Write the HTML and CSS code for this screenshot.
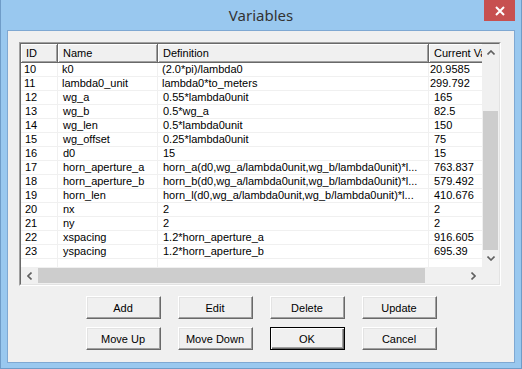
FILE: index.html
```html
<!DOCTYPE html>
<html>
<head>
  <title>Variables</title>
  <link rel="stylesheet" href="styles.css">
</head>
<body>
  <div class="window">
    <div class="titlebar">
      <span class="title">Variables</span>
      <div class="close">
        <svg width="10" height="10" viewBox="0 0 10 10">
          <path d="M1 1 L9 9 M9 1 L1 9" stroke="#fff" stroke-width="2" fill="none"/>
        </svg>
      </div>
    </div>

    <div class="client">
      <div class="listview">
        <div class="listview-inner">
          <div class="viewport">
            <div class="row header">
              <div class="cell">ID</div>
              <div class="cell">Name</div>
              <div class="cell">Definition</div>
              <div class="cell">Current Value</div>
            </div>
            <div class="row stale">
              <div class="cell">10</div>
              <div class="cell">k0</div>
              <div class="cell">(2.0*pi)/lambda0</div>
              <div class="cell">20.9585</div>
            </div>
            <div class="row stale">
              <div class="cell">11</div>
              <div class="cell">lambda0_unit</div>
              <div class="cell">lambda0*to_meters</div>
              <div class="cell">299.792</div>
            </div>
            <div class="row">
              <div class="cell">12</div>
              <div class="cell">wg_a</div>
              <div class="cell">0.55*lambda0unit</div>
              <div class="cell">165</div>
            </div>
            <div class="row">
              <div class="cell">13</div>
              <div class="cell">wg_b</div>
              <div class="cell">0.5*wg_a</div>
              <div class="cell">82.5</div>
            </div>
            <div class="row">
              <div class="cell">14</div>
              <div class="cell">wg_len</div>
              <div class="cell">0.5*lambda0unit</div>
              <div class="cell">150</div>
            </div>
            <div class="row">
              <div class="cell">15</div>
              <div class="cell">wg_offset</div>
              <div class="cell">0.25*lambda0unit</div>
              <div class="cell">75</div>
            </div>
            <div class="row">
              <div class="cell">16</div>
              <div class="cell">d0</div>
              <div class="cell">15</div>
              <div class="cell">15</div>
            </div>
            <div class="row">
              <div class="cell">17</div>
              <div class="cell">horn_aperture_a</div>
              <div class="cell">horn_a(d0,wg_a/lambda0unit,wg_b/lambda0unit)*l...</div>
              <div class="cell">763.837</div>
            </div>
            <div class="row">
              <div class="cell">18</div>
              <div class="cell">horn_aperture_b</div>
              <div class="cell">horn_b(d0,wg_a/lambda0unit,wg_b/lambda0unit)*l...</div>
              <div class="cell">579.492</div>
            </div>
            <div class="row">
              <div class="cell">19</div>
              <div class="cell">horn_len</div>
              <div class="cell">horn_l(d0,wg_a/lambda0unit,wg_b/lambda0unit)*l...</div>
              <div class="cell">410.676</div>
            </div>
            <div class="row">
              <div class="cell">20</div>
              <div class="cell">nx</div>
              <div class="cell">2</div>
              <div class="cell">2</div>
            </div>
            <div class="row">
              <div class="cell">21</div>
              <div class="cell">ny</div>
              <div class="cell">2</div>
              <div class="cell">2</div>
            </div>
            <div class="row">
              <div class="cell">22</div>
              <div class="cell">xspacing</div>
              <div class="cell">1.2*horn_aperture_a</div>
              <div class="cell">916.605</div>
            </div>
            <div class="row">
              <div class="cell">23</div>
              <div class="cell">yspacing</div>
              <div class="cell">1.2*horn_aperture_b</div>
              <div class="cell">695.39</div>
            </div>
            <div class="row filler">
              <div class="cell"></div>
              <div class="cell"></div>
              <div class="cell"></div>
              <div class="cell"></div>
            </div>
          </div>

          <div class="vscroll">
            <div class="arrow">
              <svg width="8" height="5" viewBox="0 0 8 5"><polyline points="0.5,4.5 4,1 7.5,4.5" stroke="#606060" stroke-width="1.6" fill="none"/></svg>
            </div>
            <div class="track">
              <div class="thumb"></div>
            </div>
            <div class="arrow">
              <svg width="8" height="5" viewBox="0 0 8 5"><polyline points="0.5,0.5 4,4 7.5,0.5" stroke="#606060" stroke-width="1.6" fill="none"/></svg>
            </div>
          </div>

          <div class="hscroll">
            <div class="arrow">
              <svg width="5" height="8" viewBox="0 0 5 8"><polyline points="4.5,0.5 1,4 4.5,7.5" stroke="#606060" stroke-width="1.6" fill="none"/></svg>
            </div>
            <div class="track">
              <div class="thumb"></div>
            </div>
            <div class="arrow">
              <svg width="5" height="8" viewBox="0 0 5 8"><polyline points="0.5,0.5 4,4 0.5,7.5" stroke="#606060" stroke-width="1.6" fill="none"/></svg>
            </div>
          </div>

          <div class="corner"></div>
        </div>
      </div>

      <div class="buttons">
        <div class="btnrow">
          <button type="button">Add</button>
          <button type="button">Edit</button>
          <button type="button">Delete</button>
          <button type="button">Update</button>
        </div>
        <div class="btnrow">
          <button type="button">Move Up</button>
          <button type="button">Move Down</button>
          <button type="button" class="default">OK</button>
          <button type="button">Cancel</button>
        </div>
      </div>
    </div>
  </div>
</body>
</html>
```

FILE: styles.css
```css
body {
  margin: 0;
  font-family: "Liberation Sans", Arial, sans-serif;
  font-size: 11px;
  color: #000;
}

.window {
  width: 522px;
  height: 369px;
  box-sizing: border-box;
  background-color: #99c8ef;
  border: 1px solid #6f9cc8;
  border-top: none;
  display: flex;
  flex-direction: column;
}

/* title bar */
.titlebar {
  height: 30px;
  display: grid;
  grid-template-columns: 1fr auto 1fr;
}

.title {
  grid-column: 2;
  font-family: "Noto Sans", "Open Sans", sans-serif;
  font-size: 15px;
  color: #333;
  line-height: 30px;
}

.close {
  grid-column: 3;
  justify-self: end;
  align-self: start;
  margin-right: 6px;
  width: 31px;
  height: 21px;
  background-color: #c75050;
  display: flex;
  align-items: center;
  justify-content: center;
}

/* client area */
.client {
  flex: 1;
  margin: 0 6px 6px 6px;
  border: 1px solid #7fa8d2;
  background-color: #f0f0f0;
  padding: 11px 11px 12px 11px;
}

.listview {
  width: 482px;
  height: 244px;
  box-sizing: border-box;
  border: 1px solid;
  border-color: #a0a0a0 #fff #fff #a0a0a0;
}

.listview-inner {
  height: 100%;
  box-sizing: border-box;
  border: 1px solid;
  border-color: #696969 #e3e3e3 #e3e3e3 #696969;
  display: grid;
  grid-template-columns: 1fr 17px;
  grid-template-rows: 1fr 17px;
  background-color: #fff;
}

.viewport {
  overflow: hidden;
  display: flex;
  flex-direction: column;
  background-color: #fff;
}

.row {
  display: grid;
  grid-template-columns: 37px 100px 271px 100px;
  height: 14px;
  flex-shrink: 0;
}

.cell {
  box-sizing: border-box;
  border-right: 1px solid #f0f0f0;
  border-bottom: 1px solid #f0f0f0;
  padding-left: 5px;
  line-height: 13px;
  white-space: nowrap;
  overflow: hidden;
}

.row .cell:first-child {
  padding-left: 4px;
}

.row.stale .cell {
  padding-left: 4px;
}

.row.stale .cell:first-child {
  padding-left: 3px;
}

.row.stale .cell:last-child {
  padding-left: 1px;
}

.row.header {
  height: 19px;
}

.row.header .cell {
  background-color: #f0f0f0;
  border-right: 1px solid #696969;
  border-bottom: 1px solid #696969;
  box-shadow: inset 1px 1px #fff, inset -1px -1px #a0a0a0;
  line-height: 18px;
  padding-left: 5px;
}

.row.filler {
  flex: 1;
}

.row.filler .cell {
  border-bottom: none;
}

/* scrollbars */
.vscroll {
  grid-row: 1;
  grid-column: 2;
  background-color: #f0f0f0;
  display: flex;
  flex-direction: column;
}

.vscroll .arrow {
  height: 17px;
  display: flex;
  align-items: center;
  justify-content: center;
}

.vscroll .track {
  flex: 1;
}

.vscroll .thumb {
  margin: 50px 1px 0 1px;
  height: 139px;
  background-color: #cdcdcd;
}

.hscroll {
  grid-row: 2;
  grid-column: 1;
  background-color: #f0f0f0;
  display: flex;
}

.hscroll .arrow {
  width: 17px;
  display: flex;
  align-items: center;
  justify-content: center;
}

.hscroll .track {
  flex: 1;
}

.hscroll .thumb {
  margin: 1px 0;
  width: 387px;
  height: 15px;
  background-color: #cdcdcd;
}

.corner {
  grid-row: 2;
  grid-column: 2;
  background-color: #f0f0f0;
}

/* buttons */
.buttons {
  margin-top: 10px;
  display: flex;
  flex-direction: column;
  gap: 8px;
}

.btnrow {
  display: flex;
  justify-content: center;
  gap: 17px;
}

button {
  width: 75px;
  height: 23px;
  box-sizing: border-box;
  font-family: "Liberation Sans", Arial, sans-serif;
  font-size: 11px;
  color: #000;
  background-color: #f0f0f0;
  border: 1px solid;
  border-color: #fff #696969 #696969 #fff;
  box-shadow: inset -1px -1px #a0a0a0, inset 1px 1px #e3e3e3;
  padding: 0;
}

button.default {
  border-color: #000;
  box-shadow: inset 1px 1px #fff, inset -1px -1px #696969, inset -2px -2px #a0a0a0;
}
```
